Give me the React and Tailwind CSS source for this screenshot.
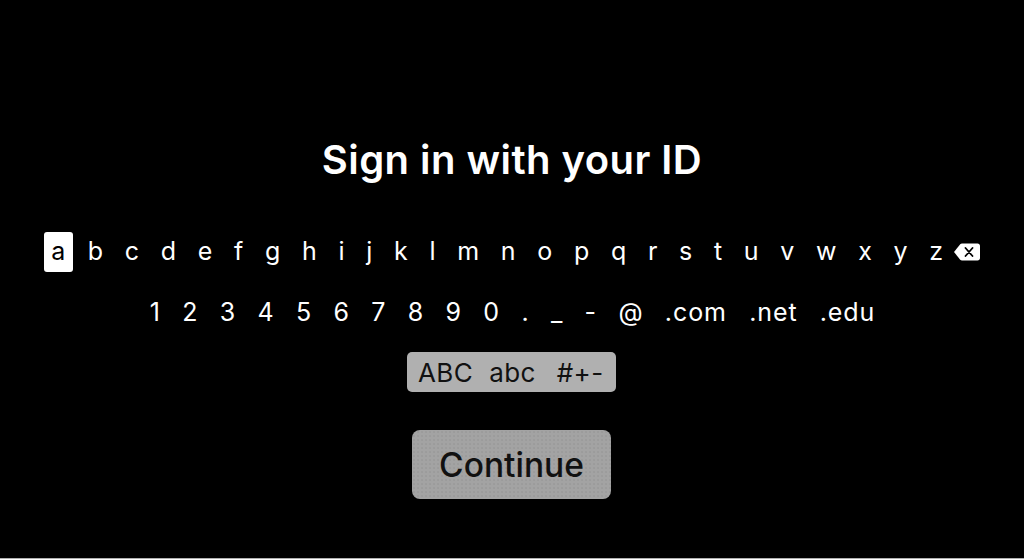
const letters = "bcdefghijklmnopqrstuvwxyz".split("");
const digits = ["1", "2", "3", "4", "5", "6", "7", "8", "9", "0", ".", "_", "-", "@"];
const domains = [".com", ".net", ".edu"];

function Backspace() {
  return (
    <svg width="28" height="20" viewBox="0 0 28 20">
      <path
        d="M9 1.5H24.5C26 1.5 27 2.5 27 4V16C27 17.500 26 18.500 24.500 18.500H9C8.300 18.500 7.700 18.200 7.200 17.700L1 10L7.200 2.300C7.700 1.800 8.300 1.500 9 1.500Z"
        fill="#fff"
      />
      <path d="M12.500 6L19.500 14M19.500 6L12.500 14" stroke="#000" strokeWidth="1.800" strokeLinecap="round" />
    </svg>
  );
}

export default function App() {
  return (
    <div className="h-[559px] w-[1024px] overflow-hidden bg-black font-['Inter',sans-serif] text-white border-b border-[#b0b0b0] flex flex-col items-center">
      <h1 className="mt-[137px] text-[40px] leading-[46px] font-semibold tracking-[0.45px]">Sign in with your ID</h1>

      <div className="mt-[49px] ml-[1px] flex h-[40px] items-center gap-[21.700px] text-[25px] font-normal">
        <div className="mr-[-6.700px] flex h-[40px] w-[29px] items-center justify-center rounded-[3px] bg-white text-black">a</div>
        {letters.map((l) => (
          <span key={l}>{l}</span>
        ))}
        <span className="ml-[-11.700px] flex items-center"><Backspace /></span>
      </div>

      <div className="mt-[20px] ml-[1px] flex h-[40px] items-center gap-[22.300px] pt-[2px] text-[25px]">
        {digits.map((s) => (
          <span key={s}>{s}</span>
        ))}
        {domains.map((s) => (
          <span key={s} className="tracking-[0.9px]">{s}</span>
        ))}
      </div>

      <div className="mt-[20px] ml-[-1px] flex h-[40px] w-[209px] items-center rounded-[5px] bg-[#b0b0b0] pl-[11px] text-[26px] tracking-[0.4px] text-[#111]">
        <span>ABC</span>
        <span className="ml-[16px]">abc</span>
        <span className="ml-[21px]">#+-</span>
      </div>

      <button className="mt-[38px] ml-[-1px] flex h-[69px] w-[199px] items-center justify-center rounded-[8px] bg-[#a3a3a3] bg-[radial-gradient(#929292_0.6px,transparent_0.8px)] bg-[length:4px_4px] pt-[2px] text-[33.5px] font-medium text-[#111]">
        Continue
      </button>
    </div>
  );
}
